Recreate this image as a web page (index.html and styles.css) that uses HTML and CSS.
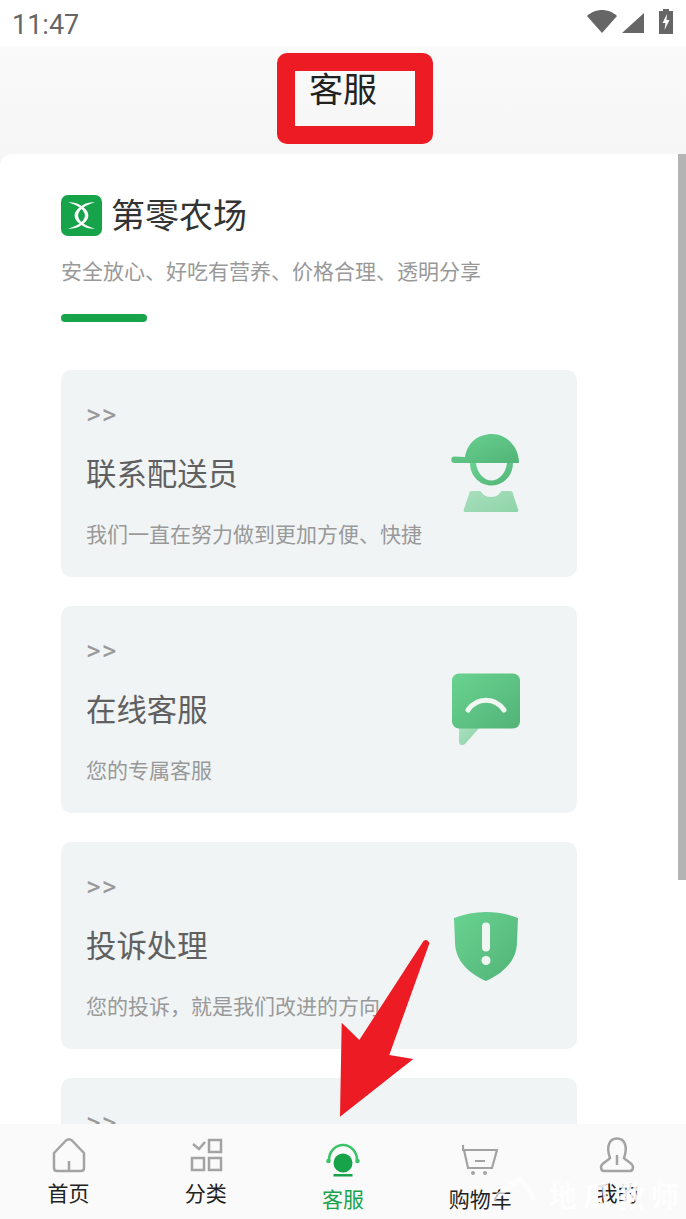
FILE: index.html

```html
<!DOCTYPE html>
<html lang="zh-CN">

<head>
    <meta charset="UTF-8">
    <meta name="viewport" content="width=device-width, initial-scale=1.0">
    <title>客服</title>

    <link rel="stylesheet" href="styles.css">
</head>

<body>
    <div class="app">
        <!-- Status bar -->
        <div class="status-bar">
            <span class="status-time">11:47</span>
            <div class="status-icons">
                <svg class="status-wifi" viewBox="0 0 30 23"><path d="M0 6C4 2 10 0 15 0s11 2 15 6L15 23z"/></svg>
                <svg class="status-signal" viewBox="0 0 22 20"><path d="M22 0v20H0z"/></svg>
                <svg class="status-battery" viewBox="0 0 14 25"><path d="M4 0h6v2h4v23H0V2h4z"/><path fill="#fff" d="M8 5 3.500 14H6.500L5.500 21 10.500 11H7.500z"/></svg>
            </div>
        </div>

        <!-- Title -->
        <header class="top-bar">
            <h1 class="top-title">客服</h1>
        </header>

        <!-- Main content -->
        <main class="content">
            <div class="brand">
                <svg class="brand-logo" viewBox="0 0 41 41">
                    <rect width="41" height="41" rx="7" fill="#17a34a"/>
                    <path d="M7 7C13 7.500 18 8.500 20.500 11 23 8.500 28 7.500 34 7 29 9 25 10.500 22.500 12.500 29 17 29 24 22.500 28.500 25 30.500 29 32 34 34 28 33.500 23 32.500 20.500 30 18 32.500 13 33.500 7 34 12 32 16 30.500 18.500 28.500 12 24 12 17 18.500 12.500 16 10.500 12 9 7 7z" fill="#fff"/>
                    <path d="M20.500 14C25 18 25 23 20.500 27 16 23 16 18 20.500 14z" fill="#17a34a"/>
                </svg>
                <span class="brand-name">第零农场</span>
            </div>
            <p class="brand-desc">安全放心、好吃有营养、价格合理、透明分享</p>
            <div class="brand-line"></div>

            <div class="service-list">
                <div class="service-card">
                    <div class="service-text">
                        <div class="service-more">&gt;&gt;</div>
                        <div class="service-title">联系配送员</div>
                        <div class="service-desc">我们一直在努力做到更加方便、快捷</div>
                    </div>
                    <svg class="service-icon" viewBox="0 0 70 80">
                        <defs>
                            <linearGradient id="green" x1="0" y1="0" x2="1" y2="1">
                                <stop offset="0" stop-color="#69d391"/>
                                <stop offset="1" stop-color="#52b377"/>
                            </linearGradient>
                            <linearGradient id="pale" x1="0" y1="0" x2="1" y2="1">
                                <stop offset="0" stop-color="#a8e0bd"/>
                                <stop offset="1" stop-color="#8ed3a8"/>
                            </linearGradient>
                        </defs>
                        <path d="M14 23C16 9 27 0 41 0s27 12 27 29H3.500a3.250 3.250 0 0 1 0-6.500z" fill="url(#green)"/>
                        <path d="M19 29h43c0 13-10 22.500-21.500 22.500S19 42 19 29zm6 0c1 10 8 17.500 15.500 17.500S55 39 56 29z" fill="url(#green)" fill-rule="evenodd"/>
                        <path d="M18 60c0-2 1-3 3-3h8c2 0 2 6 11 6s9-6 11-6h8c2 0 3 1 3 3l5 15c1 2 0 3-2 3H15c-2 0-3-1-2-3z" fill="url(#pale)"/>
                    </svg>
                </div>

                <div class="service-card">
                    <div class="service-text">
                        <div class="service-more">&gt;&gt;</div>
                        <div class="service-title">在线客服</div>
                        <div class="service-desc">您的专属客服</div>
                    </div>
                    <svg class="service-icon" viewBox="0 0 70 80">
                        <path d="M8 57h21L14 74c-3 2-6 1-6-2z" fill="url(#pale)"/>
                        <rect x="1" y="3.500" width="68" height="55" rx="7" fill="url(#green)"/>
                        <path d="M17 40C26 27 44 27 53 40" fill="none" stroke="#f0f7f3" stroke-width="5" stroke-linecap="round"/>
                    </svg>
                </div>

                <div class="service-card">
                    <div class="service-text">
                        <div class="service-more">&gt;&gt;</div>
                        <div class="service-title">投诉处理</div>
                        <div class="service-desc">您的投诉，就是我们改进的方向</div>
                    </div>
                    <svg class="service-icon service-icon-shield" viewBox="0 0 64 70">
                        <path d="M0 7C20-1 44-1 64 7l-1 24c0 18-13 31-31 39C14 62 1 49 1 31z" fill="url(#green)"/>
                        <rect x="28" y="11.500" width="8" height="29" rx="4" fill="#f0f7f3"/>
                        <circle cx="32" cy="49.500" r="4.500" fill="#f0f7f3"/>
                    </svg>
                </div>

                <div class="service-card">
                    <div class="service-text">
                        <div class="service-more">&gt;&gt;</div>
                    </div>
                </div>
            </div>

            <div class="scroll-thumb"></div>
        </main>

        <!-- Bottom tabs -->
        <nav class="tab-bar">
            <div class="tab">
                <svg class="tab-icon" viewBox="0 0 36 36"><path d="M3 16 15 3.500q3-2.500 6 0L33 16v15q0 3-3 3H6q-3 0-3-3zM18 24v10" fill="none" stroke="#a3a3a3" stroke-width="2.500" stroke-linejoin="round"/></svg>
                <span class="tab-label">首页</span>
            </div>
            <div class="tab">
                <svg class="tab-icon" viewBox="0 0 36 36"><path d="M5 7l6 5 6-7M4 21h12v12H4zM21 21h12v12H21zM21 3h12v12H21z" fill="none" stroke="#a3a3a3" stroke-width="2.500"/></svg>
                <span class="tab-label">分类</span>
            </div>
            <div class="tab tab-low tab-active">
                <svg class="tab-icon" viewBox="0 0 36 36">
                    <path d="M4 17a14 15 0 0 1 28 0" fill="none" stroke="#3cc267" stroke-width="2.500"/>
                    <circle cx="18" cy="20" r="9.500" fill="#17a34a"/>
                    <circle cx="3.500" cy="18" r="2.300" fill="#3cc267"/>
                    <circle cx="32.500" cy="18" r="2.300" fill="#3cc267"/>
                    <rect x="8.500" y="31" width="19" height="2.500" fill="#17a34a"/>
                </svg>
                <span class="tab-label">客服</span>
            </div>
            <div class="tab tab-low">
                <svg class="tab-icon" viewBox="0 0 36 36"><path d="M1 2v5h34l-5 18H6L2 7M13 18h10" fill="none" stroke="#a3a3a3" stroke-width="2.200"/><circle cx="11" cy="30" r="2" fill="#a3a3a3"/><circle cx="23" cy="30" r="2" fill="#a3a3a3"/></svg>
                <span class="tab-label">购物车</span>
            </div>
            <div class="tab">
                <svg class="tab-icon" viewBox="0 0 36 36"><path d="M11 21C7 10 10 1.500 18 1.500s11 8.500 7 19.500c2 3 9 5 9 9 0 3-1 4-3 4H5c-2 0-3-1-3-4 0-4 7-6 9-9zM18 18v10" fill="none" stroke="#a3a3a3" stroke-width="2.500"/></svg>
                <span class="tab-label">我的</span>
            </div>
        </nav>

        <!-- Annotation and watermark drawn over the screenshot -->
        <div class="mark-box"></div>
        <svg class="mark-arrow" viewBox="0 0 92 180"><path d="M84.500 3Q88 0 90.500 5L50.300 117 74.300 121 1 178.700 2.700 84.700 20.300 102z" fill="#ed1c24"/></svg>
        <svg class="watermark-logo" viewBox="0 0 46 26"><path d="M2 22C12 18 20 6 30 3c6 4 10 10 13 18" fill="none" stroke="#fff" stroke-width="5" stroke-linecap="round"/></svg>
        <div class="watermark">地瓜教师</div>
    </div>
</body>

</html>
```

FILE: styles.css

```css
* {
    box-sizing: border-box;
}

body {
    margin: 0;
    font-family: "Noto Sans CJK SC", "Noto Sans", sans-serif;
    background-color: #fff;
}

.app {
    position: relative;
    display: flex;
    flex-direction: column;
    height: 1219px;
    overflow: hidden;
    background-color: #f6f6f6;
}

.status-bar {
    display: flex;
    justify-content: space-between;
    align-items: center;
    height: 46px;
    padding: 0 13px 0 12px;
    background-color: #fff;
}

.status-time {
    margin-top: 3px;
    font-family: Roboto, sans-serif;
    font-size: 27px;
    color: #666;
}

.status-icons {
    display: flex;
    align-items: center;
    gap: 5px;
    margin-bottom: 3px;
}

.status-icons svg {
    display: block;
    fill: #666;
}

.status-wifi {
    width: 30px;
    height: 23px;
}

.status-signal {
    width: 22px;
    height: 20px;
    margin-top: 3px;
}

.status-battery {
    width: 14px;
    height: 25px;
    margin-left: 10px;
}

.top-bar {
    display: flex;
    justify-content: center;
    height: 108px;
    background: linear-gradient(#fafafa, #f6f6f6);
}

.top-title {
    margin: 20px 0 0;
    font-size: 34px;
    font-weight: normal;
    line-height: 44px;
    color: #222;
}

.content {
    position: relative;
    flex: 1;
    min-height: 0;
    overflow: hidden;
    padding: 41px 0 0 61px;
    background-color: #fff;
    border-top-left-radius: 12px;
}

.brand {
    display: flex;
    align-items: center;
    gap: 9px;
    height: 41px;
}

.brand-logo {
    width: 41px;
    height: 41px;
}

.brand-name {
    margin-bottom: 4px;
    font-size: 34px;
    color: #333;
}

.brand-desc {
    margin: 19px 0 0;
    font-size: 21px;
    line-height: 30px;
    color: #999;
}

.brand-line {
    width: 86px;
    height: 8px;
    margin-top: 29px;
    border-radius: 4px;
    background-color: #17a34a;
}

.service-list {
    display: flex;
    flex-direction: column;
    gap: 29px;
    width: 516px;
    margin-top: 48px;
}

.service-card {
    display: flex;
    flex: none;
    justify-content: space-between;
    align-items: center;
    height: 207px;
    padding: 33px 56px 0 25px;
    border-radius: 10px;
    background-color: #f0f4f5;
}

.service-text {
    align-self: flex-start;
}

.service-more {
    font-family: Roboto, sans-serif;
    font-size: 28px;
    line-height: 24px;
    letter-spacing: 1px;
    color: #999;
}

.service-title {
    margin-top: 25px;
    font-size: 30.4px;
    line-height: 40px;
    color: #606060;
}

.service-desc {
    margin-top: 26px;
    font-size: 21px;
    line-height: 30px;
    color: #999;
}

.service-icon {
    flex: none;
    width: 70px;
    height: 80px;
    margin-top: -33px;
}

.service-icon-shield {
    width: 64px;
    height: 70px;
    margin-right: 3px;
}

.scroll-thumb {
    position: absolute;
    top: 0;
    right: 0;
    width: 8px;
    height: 726px;
    background-color: #b4b4b4;
}

.tab-bar {
    display: grid;
    grid-template-columns: repeat(5, 1fr);
    flex: none;
    height: 95px;
    background-color: #fafafa;
}

.tab {
    display: flex;
    flex-direction: column;
    align-items: center;
    padding-top: 13px;
}

.tab-low {
    padding-top: 19px;
}

.tab-icon {
    display: block;
    width: 36px;
    height: 36px;
}

.tab-label {
    margin-top: 4px;
    font-size: 21px;
    line-height: 30px;
    color: #222;
}

.tab-active .tab-label {
    color: #17a34a;
}

.mark-box {
    position: absolute;
    top: 53px;
    left: 277px;
    width: 156px;
    height: 91px;
    border: 18px solid #ed1c24;
    border-radius: 10px;
}

.mark-arrow {
    position: absolute;
    top: 938px;
    left: 339px;
    width: 92px;
    height: 180px;
}

.watermark-logo {
    position: absolute;
    top: 1177px;
    left: 490px;
    width: 46px;
    height: 26px;
    opacity: 0.7;
}

.watermark {
    position: absolute;
    top: 1176px;
    left: 549px;
    font-size: 28px;
    font-weight: bold;
    line-height: 38px;
    letter-spacing: 6px;
    color: rgba(255, 255, 255, 0.9);
}
```
